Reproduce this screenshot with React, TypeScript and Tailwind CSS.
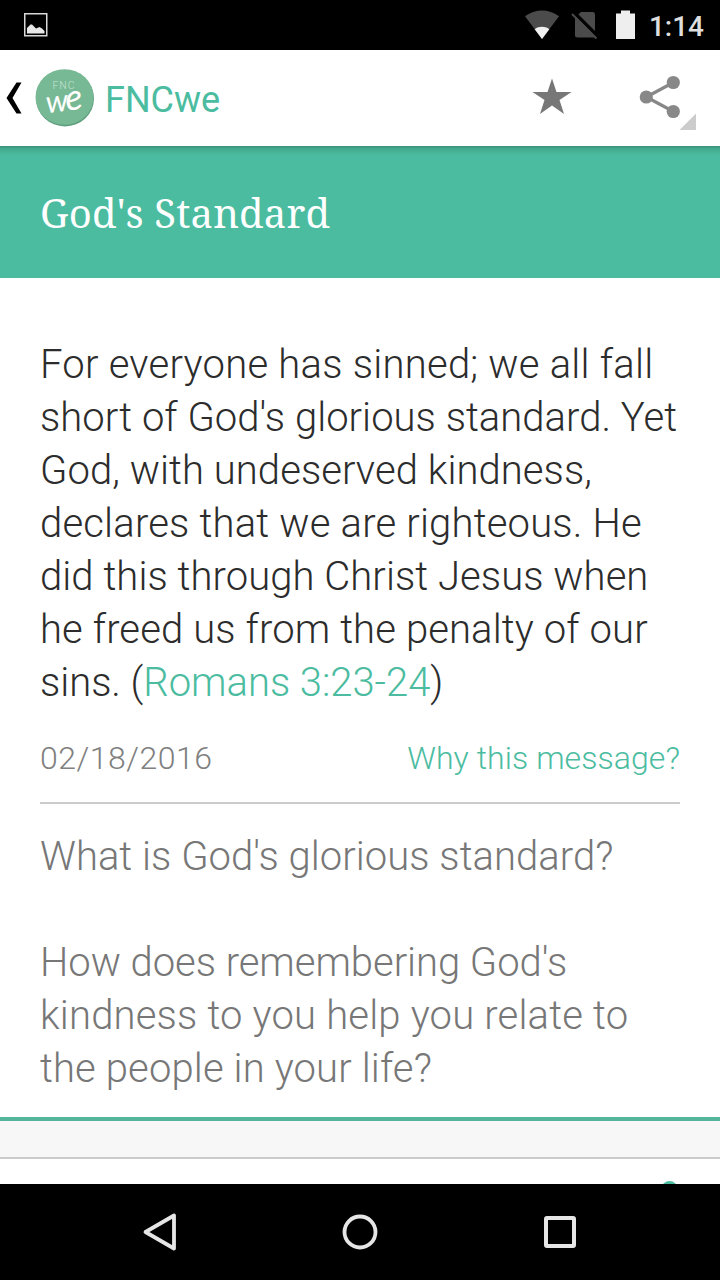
import React from 'react';

interface Line {
  text: string;
  tracking: string;
}

interface Message {
  title: string;
  text: Line[];
  reference: string;
  date: string;
  questions: Line[][];
}

const message: Message = {
  title: "God's Standard",
  text: [
    { text: 'For everyone has sinned; we all fall', tracking: 'tracking-[0.24px]' },
    { text: "short of God's glorious standard. Yet", tracking: 'tracking-[0.03px]' },
    { text: 'God, with undeserved kindness,', tracking: 'tracking-[0.06px]' },
    { text: 'declares that we are righteous. He', tracking: 'tracking-[0.19px]' },
    { text: 'did this through Christ Jesus when', tracking: 'tracking-[0.06px]' },
    { text: 'he freed us from the penalty of our', tracking: 'tracking-[0.12px]' },
  ],
  reference: 'Romans 3:23-24',
  date: '02/18/2016',
  questions: [
    [{ text: "What is God's glorious standard?", tracking: 'tracking-[0.03px]' }],
    [
      { text: "How does remembering God's", tracking: 'tracking-[-0.04px]' },
      { text: 'kindness to you help you relate to', tracking: 'tracking-[0.18px]' },
      { text: 'the people in your life?', tracking: 'tracking-[0.13px]' },
    ],
  ],
};

function StatusBar() {
  return (
    <div className="flex h-[50px] items-center bg-black pl-6 pr-4">
      <svg width="24" height="24" viewBox="0 0 24 24">
        <rect x="0.75" y="0.75" width="22" height="22" fill="none" stroke="#d8d8d8" strokeWidth="1.5" />
        <path d="M3 20.500V15L6.500 11.500H8L12 15.500L15.500 14L18 15.500L20.500 18V20.500Z" fill="#e8e8e8" />
      </svg>
      <div className="ml-auto flex items-center">
        {/* wifi */}
        <svg width="36" height="30" viewBox="0 0 36 30">
          <path d="M0 6.300C10.500 -1.400 23.500 -1.400 34 6.300L17 29Z" fill="#4b4b4b" />
          <path d="M9.700 19.200C14 16 20 16 24.300 19.200L17 29Z" fill="#f0f0f0" />
        </svg>
        {/* no sim */}
        <svg className="ml-[10px]" width="28" height="28" viewBox="0 0 28 28">
          <path d="M10 1H22Q24 1 24 3.500V26.500H6.500Q4 26.500 4 24.500V6.500Z" fill="#4b4b4b" />
          <path d="M3 1.500L27 25.500" stroke="#000" strokeWidth="3.500" />
          <path d="M1 3L25.500 27.500" stroke="#4b4b4b" strokeWidth="2" />
        </svg>
        {/* battery */}
        <svg className="ml-[16px]" width="20" height="30" viewBox="0 0 20 30">
          <path d="M1 3.500H6V0.500H15V3.500H20V29H1Z" fill="#eeeeee" />
        </svg>
        <span className="ml-[14px] pt-[3px] text-[28px] leading-8 font-medium text-[#dedede]">1:14</span>
      </div>
    </div>
  );
}

function Logo() {
  return (
    <svg className="ml-[13px]" width="60" height="60" viewBox="0 0 60 60">
      <ellipse cx="30" cy="30.500" rx="29" ry="28" fill="#5f9f7e" />
      <ellipse cx="29.500" cy="29" rx="29" ry="27.800" fill="#78b995" />
      <text x="17.500" y="21" fontSize="10.500" fontWeight="300" textLength="22" fill="#c4e2d1">
        FNC
      </text>
      <text
        x="11"
        y="43"
        fontSize="31"
        fontStyle="italic"
        fill="#ffffff"
        transform="rotate(-7 29 35)"
        className="font-['Lato',sans-serif]"
      >
        w<tspan fontSize="36" dx="-3">e</tspan>
      </text>
    </svg>
  );
}

function ActionBar() {
  return (
    <div className="flex h-24 items-center bg-white pl-1.5">
      <svg width="16" height="32" viewBox="0 0 16 32">
        <path d="M10.500 0.500H15.500L6.500 16L15.500 31.500H10.500L0.500 16Z" fill="#000" />
      </svg>
      <Logo />
      <span className="ml-[10px] pt-1 text-[36px] leading-[44px] text-[#4bbc9f]">FNCwe</span>
      <div className="ml-auto flex h-full items-center pr-6">
        <svg width="40" height="42" viewBox="0 0 40 42">
          <path d="M20 1.500L24.500 15H39.500L27.500 23L32 37L20 28.500L8 37L12.500 23L0.500 15H15.500Z" fill="#777" />
        </svg>
        <svg className="ml-[67px]" width="57" height="96" viewBox="0 0 57 96">
          <path d="M34.300 32.500L7.300 47L34.300 61.500" fill="none" stroke="#888" strokeWidth="3.200" />
          <circle cx="34.300" cy="32.500" r="6.600" fill="#888" />
          <circle cx="7.300" cy="47" r="6.600" fill="#888" />
          <circle cx="34.300" cy="61.500" r="6.600" fill="#888" />
          <path d="M57 63.500V80H40.500Z" fill="#ccc" />
        </svg>
      </div>
    </div>
  );
}

function MessageBody() {
  return (
    <div className="h-[843px] border-b-4 border-[#55b59b] bg-white px-10 pt-[60px] font-light">
      <p className="whitespace-nowrap text-[40px] leading-[53px] text-[#2c2c2c]">
        {message.text.map((line) => (
          <span key={line.text} className={`block ${line.tracking}`}>{line.text}</span>
        ))}
        <span className="block tracking-[-0.04px]">
          sins. (<a className="text-[#4bbc9f]">{message.reference}</a>)
        </span>
      </p>
      <div className="mt-7 flex h-[67px] justify-between border-b-2 border-[#cbcbcb] text-[32px] leading-[42px]">
        <span className="tracking-[0.5px] text-[#808080]">{message.date}</span>
        <a className="tracking-[0.06px] text-[#4bbc9f]">Why this message?</a>
      </div>
      <div className="mt-[26px] flex flex-col gap-[53px] whitespace-nowrap text-[40px] leading-[53px] text-[#777]">
        {message.questions.map((lines) => (
          <p key={lines[0].text}>
            {lines.map((line) => (
              <span key={line.text} className={`block ${line.tracking}`}>{line.text}</span>
            ))}
          </p>
        ))}
      </div>
    </div>
  );
}

function NavBar() {
  return (
    <div className="flex h-24 items-center justify-center gap-40 bg-black">
      <svg width="40" height="40" viewBox="0 0 40 40">
        <path d="M34 3.500V36.500L5.500 20Z" fill="none" stroke="#e6e6e6" strokeWidth="3.800" strokeLinejoin="round" />
      </svg>
      <svg width="40" height="40" viewBox="0 0 40 40">
        <circle cx="20" cy="20" r="15.500" fill="none" stroke="#e6e6e6" strokeWidth="3.800" />
      </svg>
      <svg width="40" height="40" viewBox="0 0 40 40">
        <rect x="6" y="6" width="28" height="28" rx="1" fill="none" stroke="#e6e6e6" strokeWidth="4" />
      </svg>
    </div>
  );
}

function App() {
  return (
    <div className="flex h-[1280px] w-[720px] flex-col overflow-hidden bg-white font-['Roboto',sans-serif]">
      <StatusBar />
      <ActionBar />
      <div className="flex h-[132px] items-center bg-[#4bbc9f] bg-[linear-gradient(#388c75,#41a68b_2px,#4bbc9f_9px)] px-10">
        <h1 className="text-[40px] leading-[53px] tracking-[0.15px] text-white font-['Noto_Serif','Droid_Serif','DejaVu_Serif_Condensed','DejaVu_Serif',serif]">
          {message.title}
        </h1>
      </div>
      <MessageBody />
      <div className="h-[38px] border-b-2 border-[#cbcbcb] bg-[#f7f7f7]" />
      {/* top of the next card, cut off by the nav bar */}
      <div className="flex h-[25px] items-end justify-end overflow-hidden bg-white pr-[43px]">
        <svg width="15" height="4" viewBox="0 0 15 4">
          <circle cx="7.500" cy="9" r="8" fill="#4bbc9f" />
        </svg>
      </div>
      <NavBar />
    </div>
  );
}

export default App;
